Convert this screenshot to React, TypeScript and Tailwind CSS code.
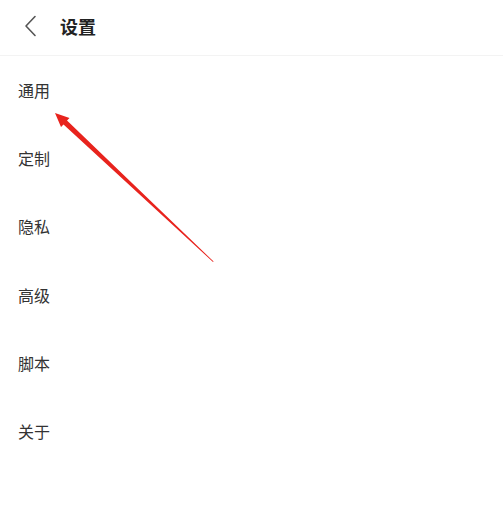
import React from "react";

const items = ["通用", "定制", "隐私", "高级", "脚本", "关于"];

export default function App() {
  return (
    <div
      className="relative w-[503px] h-[505px] bg-white overflow-hidden"
      style={{ fontFamily: '"Noto Sans CJK SC", "Noto Sans", sans-serif' }}
    >
      <div className="h-[56px] flex items-center pb-[3px] border-b border-[#f3f3f3]">
        <svg width="14" height="22" viewBox="0 0 14 22" className="ml-[23px]">
          <path d="M12 1.5 L3 11 L12 20.5" fill="none" stroke="#555" strokeWidth="1.6" strokeLinecap="round" strokeLinejoin="round" />
        </svg>
        <span className="ml-[23px] text-[18px] font-bold text-[#222] leading-none">设置</span>
      </div>
      <div className="flex flex-col pt-[17px]">
        {items.map((t) => (
          <div key={t} className="h-[68.2px] pl-[18px] flex items-start">
            <span className="text-[16px] text-[#333] leading-[34px]">{t}</span>
          </div>
        ))}
      </div>
      <svg className="absolute left-0 top-0 pointer-events-none" width="503" height="505" viewBox="0 0 503 505">
        <polygon points="213,262 213.6,261.4 67,120.5 69.5,118 55,113 61,127 63.5,124.5" fill="#e8231d" />
      </svg>
    </div>
  );
}
